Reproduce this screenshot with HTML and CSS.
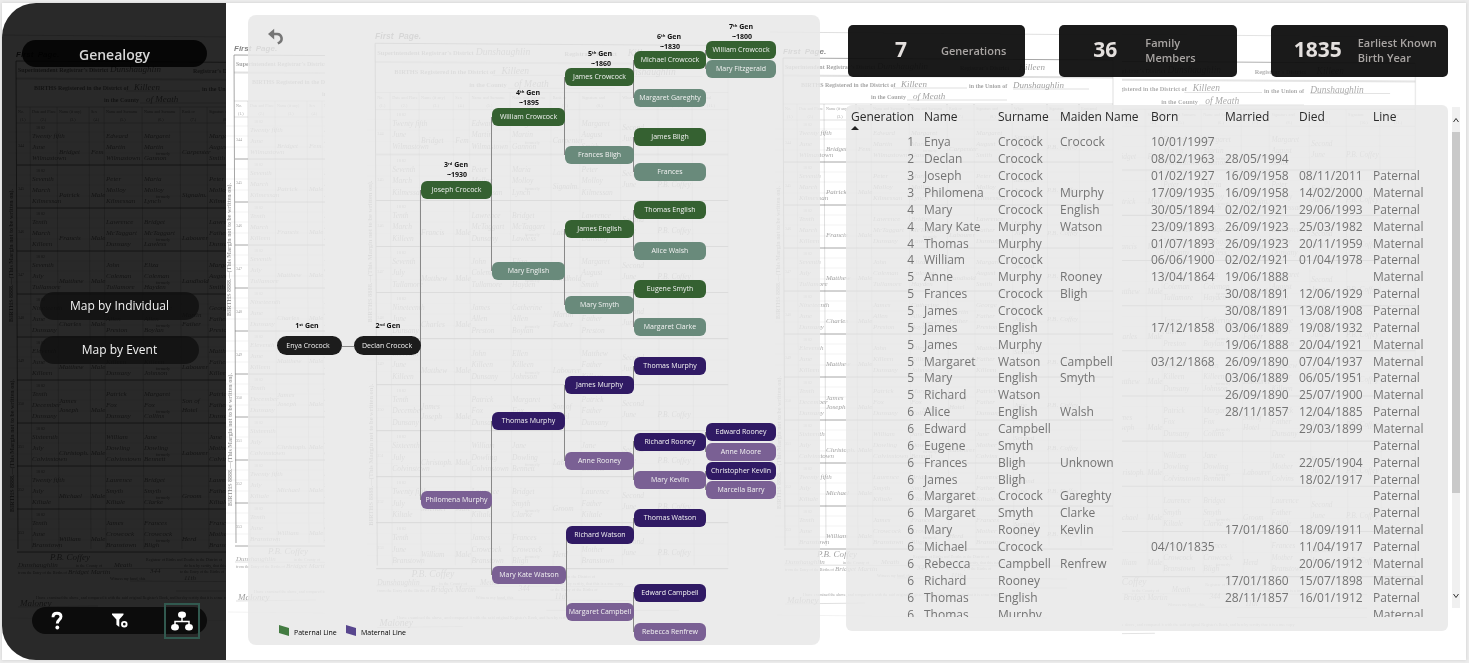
FILE: index.html
```html
<!DOCTYPE html>
<html lang="en">
<head>
<meta charset="utf-8">
<title>Genealogy</title>
<link rel="stylesheet" href="styles.css">
</head>
<body>
<div class="report">
  <svg class="register" id="register" aria-hidden="true"></svg>

  <aside class="sidebar">
    <h1 class="sidebar-title">Genealogy</h1>
    <nav class="map-nav">
      <button class="map-button" type="button">Map by Individual</button>
      <button class="map-button" type="button">Map by Event</button>
    </nav>
    <nav class="toolbar">
      <button class="tool" type="button" aria-label="Help">
        <svg width="14" height="20" viewBox="0 0 14 20"><path d="M3 6.2C3 3.400 4.700 2.200 7 2.200s4 1.200 4 3.400c0 3.200-3.700 3-3.700 7" fill="none" stroke="#fff" stroke-width="2.900"/><circle cx="7.300" cy="16.500" r="1.900" fill="#fff"/></svg>
      </button>
      <button class="tool" type="button" aria-label="Filter">
        <svg width="18" height="18" viewBox="0 0 18 18"><path d="M1 1.500h11.500v1.200L8.300 7.600V15L5.400 12.800V7.600L1 2.700z" fill="#fff"/><circle cx="13.300" cy="12.200" r="2.300" fill="none" stroke="#fff" stroke-width="1.900"/></svg>
      </button>
      <button class="tool tool-active" type="button" aria-label="Family tree">
        <svg width="22" height="20" viewBox="0 0 22 20"><path d="M11 5v5.500M4 15v-4.500h14V15" fill="none" stroke="#fff" stroke-width="1.500"/><ellipse cx="11" cy="3.800" rx="4" ry="3.300" fill="#fff"/><ellipse cx="4" cy="16.300" rx="3.900" ry="3.200" fill="#fff"/><ellipse cx="18" cy="16.300" rx="3.900" ry="3.200" fill="#fff"/></svg>
      </button>
    </nav>
  </aside>

  <section class="tree-panel">
    <svg class="tree" id="tree" viewBox="248 15 572 630" role="img" aria-label="Family tree"></svg>
    <button class="back" type="button" aria-label="Back">
      <svg width="18" height="18" viewBox="0 0 18 18"><path d="M4 6.100h6.300a4.600 4.600 0 0 1 2 8.600l-1.500.7" fill="none" stroke="#767676" stroke-width="2.500"/><path d="M7.200.8v10.600L1 6.100z" fill="#767676"/></svg>
    </button>
  </section>

  <main class="details">
    <section class="stats">
      <article class="stat stat-generations"><strong class="stat-value">7</strong><span class="stat-label">Generations</span></article>
      <article class="stat stat-members"><strong class="stat-value">36</strong><span class="stat-label">Family<br>Members</span></article>
      <article class="stat stat-year"><strong class="stat-value">1835</strong><span class="stat-label">Earliest Known<br>Birth Year</span></article>
    </section>
    <section class="list">
      <div class="people">
        <div class="people-view">
          <table class="people-table">
            <colgroup><col class="c-gen"><col class="c-date"><col class="c-surname"><col class="c-maiden"><col class="c-date"><col class="c-date"><col class="c-date"><col></colgroup>
            <thead><tr>
              <th class="num" aria-sort="ascending">Generation<svg class="sort" width="8" height="4" viewBox="0 0 8 4"><path d="M0 4L4 0l4 4z"/></svg></th>
              <th>Name</th><th>Surname</th><th>Maiden Name</th><th>Born</th><th>Married</th><th>Died</th><th>Line</th>
            </tr></thead>
            <tbody id="people"></tbody>
          </table>
        </div>
      </div>
      <div class="scroller">
        <button class="scroll-step" type="button" aria-label="Scroll up"><svg width="8" height="8" viewBox="0 0 8 8"><path d="M1.500 6L4 2.500 6.500 6"/></svg></button>
        <div class="scroll-track"><div class="scroll-thumb"></div></div>
        <button class="scroll-step" type="button" aria-label="Scroll down"><svg width="8" height="8" viewBox="0 0 8 8"><path d="M1.500 2L4 5.500 6.500 2"/></svg></button>
      </div>
    </section>
  </main>
</div>
<script src="app.js"></script>
</body>
</html>
```

FILE: styles.css
```css
* { box-sizing: border-box; }

body {
  margin: 0;
  background: #ececec;
  font-family: "Open Sans", "Noto Sans", sans-serif;
  font-size: 12px;
}

button {
  border: 0;
  padding: 0;
  background: none;
  font: inherit;
  color: inherit;
}

.report {
  position: relative;
  display: grid;
  grid-template-columns: 224px 593px 1fr;
  min-height: calc(100vh - 6px);
  margin: 3px 3px 3px 2px;
  background: #fff;
  overflow: hidden;
  box-shadow: 0 0 3px #ccc;
}

.register {
  position: absolute;
  inset: 0;
  width: 100%;
  height: 100%;
}

.register .print { font-family: "Liberation Serif", serif; font-size: 6px; font-weight: bold; opacity: 0.75; }
.register .small { font-family: "Liberation Serif", serif; font-size: 4px; opacity: 0.8; }
.register .title { font-family: "Liberation Sans", sans-serif; font-size: 8px; font-weight: bold; font-style: italic; }
.register .pen { font-family: "Liberation Serif", serif; font-size: 7px; font-style: italic; opacity: 0.75; }
.register .pen-large { font-family: "Liberation Serif", serif; font-size: 9px; font-style: italic; opacity: 0.8; }
.register .rule { stroke: #000; stroke-width: 1; opacity: 0.7; }
.register .hair { stroke: #000; stroke-width: 1; opacity: 0.25; }
.register .faint { stroke: #000; stroke-width: 1; opacity: 0.1; }

.sidebar {
  position: relative;
  display: flex;
  flex-direction: column;
  padding: 37px 19px 26px 20px;
  background: rgba(0, 0, 0, 0.84);
  border-radius: 34px 0 0 34px;
}

.sidebar-title {
  margin: 0;
  height: 27px;
  border-radius: 14px;
  background: rgba(0, 0, 0, 0.85);
  color: #d6d6d6;
  font-size: 14px;
  font-weight: 600;
  line-height: 30px;
  text-align: center;
}

.map-nav {
  display: flex;
  flex-direction: column;
  gap: 16px;
  margin: 225px 8px 0 18px;
}

.map-button {
  height: 28px;
  padding-bottom: 1px;
  border-radius: 14px;
  background: rgba(13, 13, 13, 0.75);
  color: #f2f2f2;
}

.toolbar {
  display: flex;
  align-items: center;
  justify-content: space-between;
  height: 27px;
  margin: auto 0 0 10px;
  padding: 0 7px;
  border-radius: 14px;
  background: #0c0c0c;
}

.tool {
  display: grid;
  place-items: center;
  flex: none;
  width: 36px;
  height: 36px;
}

.tool:nth-child(2) { width: 26px; }

.tool-active { border: 2px solid #31594f; }

.tree-panel {
  position: relative;
  margin: 12px 0 15px 22px;
  width: 572px;
  border-radius: 8px;
  background: rgba(231, 231, 231, 0.85);
}

.tree { display: block; width: 100%; }
.tree text { font-size: 7px; font-weight: 500; text-anchor: middle; fill: #f2f2f2; }
.tree .gen { font-weight: 700; fill: #111; }
.tree .sup { font-size: 4px; }
.tree .key { fill: #000; text-anchor: start; }
.tree .root { fill: #1c1c1c; }
.tree .pat { fill: #356131; }
.tree .pat-wife { fill: #698a7b; }
.tree .mat { fill: #301a64; }
.tree .mat-wife { fill: #7a6094; }
.tree .link { stroke: #888; stroke-width: 1; fill: none; }

.back {
  position: absolute;
  left: 19px;
  top: 13px;
  width: 18px;
  height: 18px;
}

.details {
  position: relative;
  display: flex;
  flex-direction: column;
  min-width: 0;
  margin: 22px 6px 29px 27px;
}

.stats {
  display: grid;
  grid-template-columns: repeat(3, 1fr);
  gap: 34px;
  margin: 0 12px 28px 2px;
}

.stat {
  display: flex;
  align-items: center;
  gap: 4px;
  min-width: 0;
  height: 52px;
  border-radius: 5px;
  background: rgba(12, 12, 12, 0.94);
}

.stat-generations { padding-left: 17px; }
.stat-members { padding-left: 10px; }
.stat-year { padding-left: 11px; }

.stat-value {
  flex: none;
  width: 72px;
  padding-bottom: 4px;
  color: #e4e0de;
  font-size: 21px;
  line-height: 24px;
  text-align: center;
}

.stat-label {
  padding-bottom: 2px;
  color: #a9a5a3;
  font-size: 11px;
  font-weight: 600;
  line-height: 15px;
  white-space: nowrap;
}

.list {
  display: flex;
  gap: 4px;
}

.people {
  flex: 1;
  min-width: 0;
  padding-bottom: 14px;
  border-radius: 6px;
  background: rgba(231, 231, 231, 0.85);
}

.people-view {
  height: 512px;
  overflow: hidden;
}

.people-table {
  width: 100%;
  height: 518px;
  border-collapse: collapse;
  table-layout: fixed;
  color: #747474;
  line-height: 16px;
}

.people-table thead tr { height: 29px; }
.people-table th {
  padding: 4px 0 0 5px;
  color: #2a2a2a;
  font-weight: 500;
  text-align: left;
  vertical-align: top;
  white-space: nowrap;
}
.people-table td { padding: 0 0 0 5px; white-space: nowrap; }
.people-table .num { padding-right: 5px; padding-left: 0; text-align: right; }
.people-table .sort { display: block; margin: 1px 0 0 5px; fill: #222; }
.c-gen { width: 73px; }
.c-date { width: 74px; }
.c-surname { width: 62px; }
.c-maiden { width: 91px; }

.scroller {
  display: flex;
  flex-direction: column;
  width: 8px;
  height: 501px;
  margin-top: 2px;
  background: #f0f0f0;
}

.scroll-step {
  display: grid;
  place-items: center;
  height: 25px;
}
.scroll-step path { fill: none; stroke: #333; stroke-width: 1; }
.scroll-track { flex: 1; }
.scroll-thumb { height: 80%; background: #c9c9c9; }
```

FILE: app.js
```js
const esc = (s) => s.replace(/&/g, "&amp;");

/* People table */
const people = `1|Enya|Crocock|Crocock|10/01/1997|||
2|Declan|Crocock||08/02/1963|28/05/1994||
3|Joseph|Crocock||01/02/1927|16/09/1958|08/11/2011|Paternal
3|Philomena|Crocock|Murphy|17/09/1935|16/09/1958|14/02/2000|Maternal
4|Mary|Crocock|English|30/05/1894|02/02/1921|29/06/1993|Paternal
4|Mary Kate|Murphy|Watson|23/09/1893|26/09/1923|25/03/1982|Maternal
4|Thomas|Murphy||01/07/1893|26/09/1923|20/11/1959|Maternal
4|William|Crocock||06/06/1900|02/02/1921|01/04/1978|Paternal
5|Anne|Murphy|Rooney|13/04/1864|19/06/1888||Maternal
5|Frances|Crocock|Bligh||30/08/1891|12/06/1929|Paternal
5|James|Crocock|||30/08/1891|13/08/1908|Paternal
5|James|English||17/12/1858|03/06/1889|19/08/1932|Paternal
5|James|Murphy|||19/06/1888|20/04/1921|Maternal
5|Margaret|Watson|Campbell|03/12/1868|26/09/1890|07/04/1937|Maternal
5|Mary|English|Smyth||03/06/1889|06/05/1951|Paternal
5|Richard|Watson|||26/09/1890|25/07/1900|Maternal
6|Alice|English|Walsh||28/11/1857|12/04/1885|Paternal
6|Edward|Campbell||||29/03/1899|Maternal
6|Eugene|Smyth|||||Paternal
6|Frances|Bligh|Unknown|||22/05/1904|Paternal
6|James|Bligh||||18/02/1917|Paternal
6|Margaret|Crocock|Gareghty||||Paternal
6|Margaret|Smyth|Clarke||||Paternal
6|Mary|Rooney|Kevlin||17/01/1860|18/09/1911|Maternal
6|Michael|Crocock||04/10/1835||11/04/1917|Paternal
6|Rebecca|Campbell|Renfrew|||20/06/1912|Maternal
6|Richard|Rooney|||17/01/1860|15/07/1898|Maternal
6|Thomas|English|||28/11/1857|16/01/1912|Paternal
6|Thomas|Murphy|||||Maternal`;
document.getElementById("people").innerHTML = people.split("\n").map((row) =>
  "<tr>" + row.split("|").map((v, i) => `<td${i ? "" : ' class="num"'}>${esc(v)}</td>`).join("") + "</tr>"
).join("");

/* Family tree: left, top, width, kind, name */
const nodes = [
  [421, 181, 71, "pat", "Joseph Crocock"], [421, 491, 71, "mat-wife", "Philomena Murphy"],
  [492, 108, 73, "pat", "William Crowcock"], [492, 262, 73, "pat-wife", "Mary English"],
  [492, 412, 73, "mat", "Thomas Murphy"], [492, 566, 74, "mat-wife", "Mary Kate Watson"],
  [565, 68, 69, "pat", "James Crowcock"], [565, 146, 69, "pat-wife", "Frances Bligh"],
  [565, 220, 69, "pat", "James English"], [565, 296, 69, "pat-wife", "Mary Smyth"],
  [565, 376, 69, "mat", "James Murphy"], [565, 452, 69, "mat-wife", "Anne Rooney"],
  [566, 526, 68, "mat", "Richard Watson"], [566, 603, 68, "mat-wife", "Margaret Campbell"],
  [634, 51, 72, "pat", "Michael Crowcock"], [634, 89, 72, "pat-wife", "Margaret Gareghty"],
  [634, 128, 72, "pat", "James Bligh"], [634, 163, 72, "pat-wife", "Frances"],
  [634, 201, 72, "pat", "Thomas English"], [634, 242, 72, "pat-wife", "Alice Walsh"],
  [634, 280, 72, "pat", "Eugene Smyth"], [634, 318, 72, "pat-wife", "Margaret Clarke"],
  [634, 357, 72, "mat", "Thomas Murphy"], [634, 433, 72, "mat", "Richard Rooney"],
  [634, 471, 72, "mat-wife", "Mary Kevlin"], [634, 509, 72, "mat", "Thomas Watson"],
  [634, 584, 72, "mat", "Edward Campbell"], [634, 623, 72, "mat-wife", "Rebecca Renfrew"],
  [706, 41, 70, "pat", "William Crowcock"], [706, 60, 70, "pat-wife", "Mary Fitzgerald"],
  [706, 423, 70, "mat", "Edward Rooney"], [706, 443, 70, "mat-wife", "Anne Moore"],
  [706, 462, 70, "mat", "Christopher Kevlin"], [706, 481, 70, "mat-wife", "Marcella Barry"]
];
/* Vertical connectors: x, from, to */
const links = [[421, 190, 500], [492, 117, 271], [492, 421, 575], [565, 77, 155], [565, 229, 305],
  [565, 385, 461], [567, 535, 612], [634, 60, 98], [634, 137, 172], [634, 210, 251], [634, 289, 327],
  [634, 366, 385], [634, 441, 480], [634, 518, 535], [634, 592, 632], [706, 50, 69], [706, 432, 452], [706, 471, 490]];
const gens = [[307, 328, "1", "st"], [388, 328, "2", "nd"], [456, 167, "3", "rd", "~1930"],
  [528, 95, "4", "th", "~1895"], [600, 56, "5", "th", "~1860"], [669, 39, "6", "th", "~1830"], [741, 29, "7", "th", "~1800"]];

let tree = links.map(([x, a, b]) => `<path class="link" d="M${x}.5 ${a}V${b}" transform="translate(-1 0)"/>`).join("");
tree += '<path class="link" d="M342 346.500H354"/>';
tree += '<rect class="root" x="277" y="336" width="65" height="19" rx="9.500"/><text x="308" y="348">Enya Crocock</text>';
tree += '<rect class="root" x="354" y="336" width="67" height="19" rx="9.500"/><text x="387" y="348">Declan Crocock</text>';
tree += nodes.map(([x, y, w, kind, name]) =>
  `<rect class="${kind}" x="${x}" y="${y}" width="${w}" height="18" rx="6"/><text x="${x + w / 2}" y="${y + 11}">${name}</text>`).join("");
tree += gens.map(([x, y, n, suffix, year]) =>
  `<text class="gen" x="${x}" y="${y}">${n}<tspan class="sup" dy="-2">${suffix}</tspan><tspan dy="2"> Gen</tspan></text>` +
  (year ? `<text class="gen" x="${x + 1}" y="${y + 10}">${year}</text>` : "")).join("");
tree += '<path fill="#437b41" d="M279 625l10 3v8l-10-3z"/><text class="key" x="294" y="635">Paternal Line</text>';
tree += '<path fill="#58468e" d="M346 625l10 3v8l-10-3z"/><text class="key" x="361" y="635">Maternal Line</text>';
document.getElementById("tree").innerHTML = tree;

/* Register pages behind the report */
const columns = [16, 30, 57, 89, 104, 142, 180, 207, 245, 280, 312, 346];
const records = [
  ["344", "Twenty fifth|June|Wilmastown", "Bridget", "Fem", "Edward|Martin|Wilmastown", "Margaret|Martin|Gannon", "Carpenter", "Margaret|August|Smith"],
  ["345", "Seventh|March|Kilmessan", "Patrick", "Male", "Peter|Molloy|Kilmessan", "Maria|Molloy|Lynch", "Signalm.", "Peter|Molloy|Kilmessan"],
  ["346", "Tenth|March|Killeen", "Francis", "Male", "Lawrence|McTaggart|Dunsany", "Bridget|McTaggart|Lawless", "Labourer", "Lawrence|Father|Dunsany"],
  ["347", "Seventh|July|Tullamore", "Matthew", "Male", "John|Coleman|Tullamore", "Eliza|Coleman|Hayden", "Landhold", "Margaret|August|Smith"],
  ["348", "Nineteenth|June|Dunsany", "Charles", "Male", "James|Allen|Preston", "Catherine|Allen|Boylan", "Father|Martin", "George|Father|Preston"],
  ["349", "Eleventh|June|Killeen", "Matthew", "Male", "John|Killeen|Dunsany", "Ellen|Killeen|Johnson", "Labourer", "Matthew|Father|Killeen"],
  ["350", "Tenth|December|Dunsany", "Joseph|James", "Male", "Patrick|Fox|Dunsany", "Margaret|Fox|Collins", "Hotel|Son of", "Patrick|Father|Dunsany"],
  ["351", "Sixteenth|July|Colvinstown", "Christoph.", "Male", "William|Dowling|Colvinstown", "Jane|Dowling|Bennett", "Labourer", "Jane|Mother|Colvins"],
  ["352", "Twenty fifth|July|Kiltale", "Michael", "Male", "Laurence|Smyth|Kiltale", "Bridget|Smyth|Clarke", "Groom", "Laurence|Father|Kiltale"],
  ["353", "Tenth|June|Branstown", "William", "Male", "James|Crowcock|Branstown", "Frances|Crowcock|Bligh", "Herd", "Frances|Mother|Branstown"]
];
const t = (cls, x, y, s) => `<text class="${cls}" x="${x}" y="${y}">${s}</text>`;
const line = (cls, x1, y1, x2, y2) => `<path class="${cls}" d="M${x1} ${y1}L${x2} ${y2}"/>`;

let page = t("title", 16, 57, "First&#160; Page.") + line("hair", 0, 35, 350, 38);
page += t("print", 18, 72, "Superintendent Registrar's District") + t("pen-large", 110, 72, "Dunshaughlin");
page += t("print", 193, 73, "Registrar's District") + t("pen-large", 252, 73, "Killeen");
page += t("print", 34, 90, "BIRTHS Registered in the District of") + t("pen-large", 134, 90, "Killeen");
page += t("print", 202, 91, "in the Union of") + t("pen-large", 246, 91, "Dunshaughlin");
page += t("print", 104, 102, "in the County") + t("pen-large", 146, 102, "of Meath");
page += line("hair", 126, 91, 200, 91) + line("hair", 140, 103, 240, 103) + line("hair", 246, 92, 322, 92);
page += line("rule", 16, 61, 346, 63) + line("hair", 16, 78, 346, 80) + line("hair", 16, 79, 346, 81) + line("hair", 16, 107, 346, 107) + line("hair", 16, 123, 346, 123);
page += line("rule", 16, 61, 18, 549) + line("hair", 346, 63, 346, 549);
["No.", "Date and Place", "Name (if any)", "Sex", "Name and Surname", "Name and Surname", "Rank or", "Signature and", "When", "Signature", "Baptismal"].forEach((s, i) => {
  page += t("small", columns[i] + 2, 113, s) + t("small", columns[i] + (columns[i + 1] - columns[i]) / 2 - 3, 121, `(${i + 1}.)`);
});
columns.slice(1, -1).forEach((x) => { page += line("hair", x, 107, x + 2, 549); });
records.forEach((r, i) => {
  const y = 122 + i * 43;
  page += line("rule", 17, y + 43, 346, y + 43);
  [10, 20, 31].forEach((d) => { page += line("faint", 8, y + d, 346, y + d); });
  page += t("small", 36, y + 7, "18 82");
  r.forEach((cell, c) => {
    const parts = cell.split("|");
    const from = parts.length === 3 ? 16 : c === 0 ? 25 : 32;
    const step = parts.length === 3 ? 11 : -9;
    const cls = c === 0 ? "small" : "pen";
    parts.forEach((s, k) => { page += t(cls, columns[c] + 2, y + from + step * k, s); });
  });
  page += t("small", 156, y + 33, "formerly");
  page += t("pen", 247, y + 20, "Second") + t("pen", 247, y + 30, "June") + t("pen", 280, y + 30, "P.B. Coffey");
});
[[13, 322], [14, 512]].forEach(([x, y]) => {
  page += `<text class="print" transform="translate(${x} ${y}) rotate(-90)">BIRTHS 8888.&#8212;(This Margin not to be written on).</text>`;
});
page += t("pen-large", 50, 560, "P.B. Coffey") + t("pen", 18, 567, "Dunshaughlin") + t("small", 76, 567, "in the County of") + t("pen", 114, 567, "Meath");
page += t("small", 146, 561, "Registrar of Births and Deaths in the District of") + t("small", 184, 567, "do hereby certify, that this is a true copy");
page += t("small", 18, 574, "from the Entry of the Births of") + t("pen", 68, 574, "Bridget Martin") + t("pen", 150, 573, "344") + t("small", 180, 573, "to the Entry of the Births of");
page += t("small", 110, 580, "Witness my hand, this") + t("pen", 184, 580, "11th") + line("hair", 17, 568, 300, 569) + line("hair", 130, 581, 300, 582);
page += t("small", 36, 599, "I have examined the above, and compared it with the said original Register's Book, and hereby certify that it is a true copy") + t("pen-large", 20, 606, "Maloney") + line("hair", 18, 607, 98, 606) + line("hair", 176, 591, 300, 591) + line("faint", 10, 618, 280, 621);

/* Each copy: clip left, clip width, shift x, shift y, scale, opacity */
const copies = [[0, 224, -2, -3, 1, 0.75], [224, 99, 216, -9, 1, 0.5], [356, 373, 356, -25, 1.07, 0.55],
  [768, 352, 765, -6, 1, 0.5], [1120, 340, 1050, -6, 1.05, 0.45]];
let art = `<defs><g id="page">${page}</g>`;
copies.forEach(([x, w], i) => { art += `<clipPath id="cut${i}"><rect x="${x}" y="28" width="${w}" height="604"/></clipPath>`; });
art += "</defs>";
copies.forEach(([, , dx, dy, k, o], i) => {
  art += `<g clip-path="url(#cut${i})" opacity="${o}"><use href="#page" transform="translate(${dx} ${dy}) scale(${k})"/></g>`;
});
document.getElementById("register").innerHTML = art;
```
